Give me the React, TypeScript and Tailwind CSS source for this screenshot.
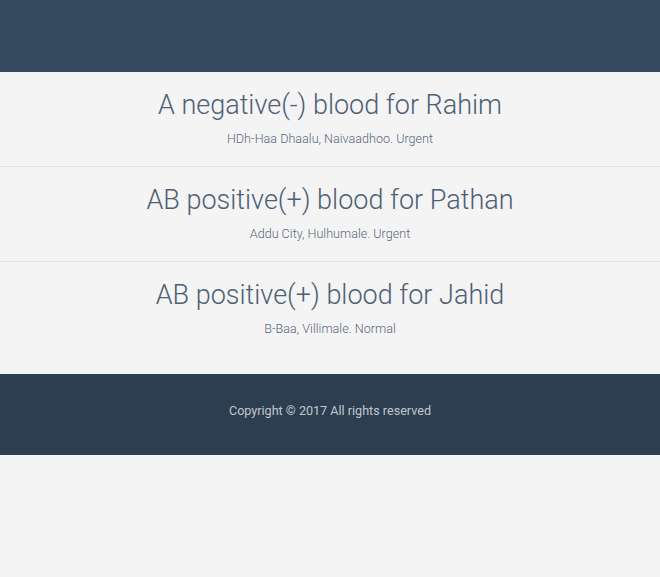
import React from "react";

const items = [
  { title: "A negative(-) blood for Rahim", sub: "HDh-Haa Dhaalu, Naivaadhoo. Urgent" },
  { title: "AB positive(+) blood for Pathan", sub: "Addu City, Hulhumale. Urgent" },
  { title: "AB positive(+) blood for Jahid", sub: "B-Baa, Villimale. Normal" },
];

export default function App() {
  return (
    <div className="min-h-[577px] bg-[#f4f4f4]" style={{ fontFamily: "Roboto, 'Noto Sans', sans-serif" }}>
      <header className="h-[72px] bg-[#34495e]" />
      <main className="pb-[18px]">
        {items.map((it, i) => (
          <div
            key={i}
            className={`flex flex-col items-center pt-[17px] pb-[19px] ${i < items.length - 1 ? "border-b border-[#e2e2e2]" : ""}`}
          >
            <h2 className="text-[27px] leading-[32px] font-light text-[#4d6075]">{it.title}</h2>
            <p className="mt-[9px] text-[12.6px] leading-[17px] font-light text-[#5a687a]">{it.sub}</p>
          </div>
        ))}
      </main>
      <footer className="h-[81px] bg-[#2c3e50] flex items-center justify-center pb-[7px]">
        <p className="text-[12.6px] text-[#c2c7ce]">Copyright © 2017 All rights reserved</p>
      </footer>
    </div>
  );
}
